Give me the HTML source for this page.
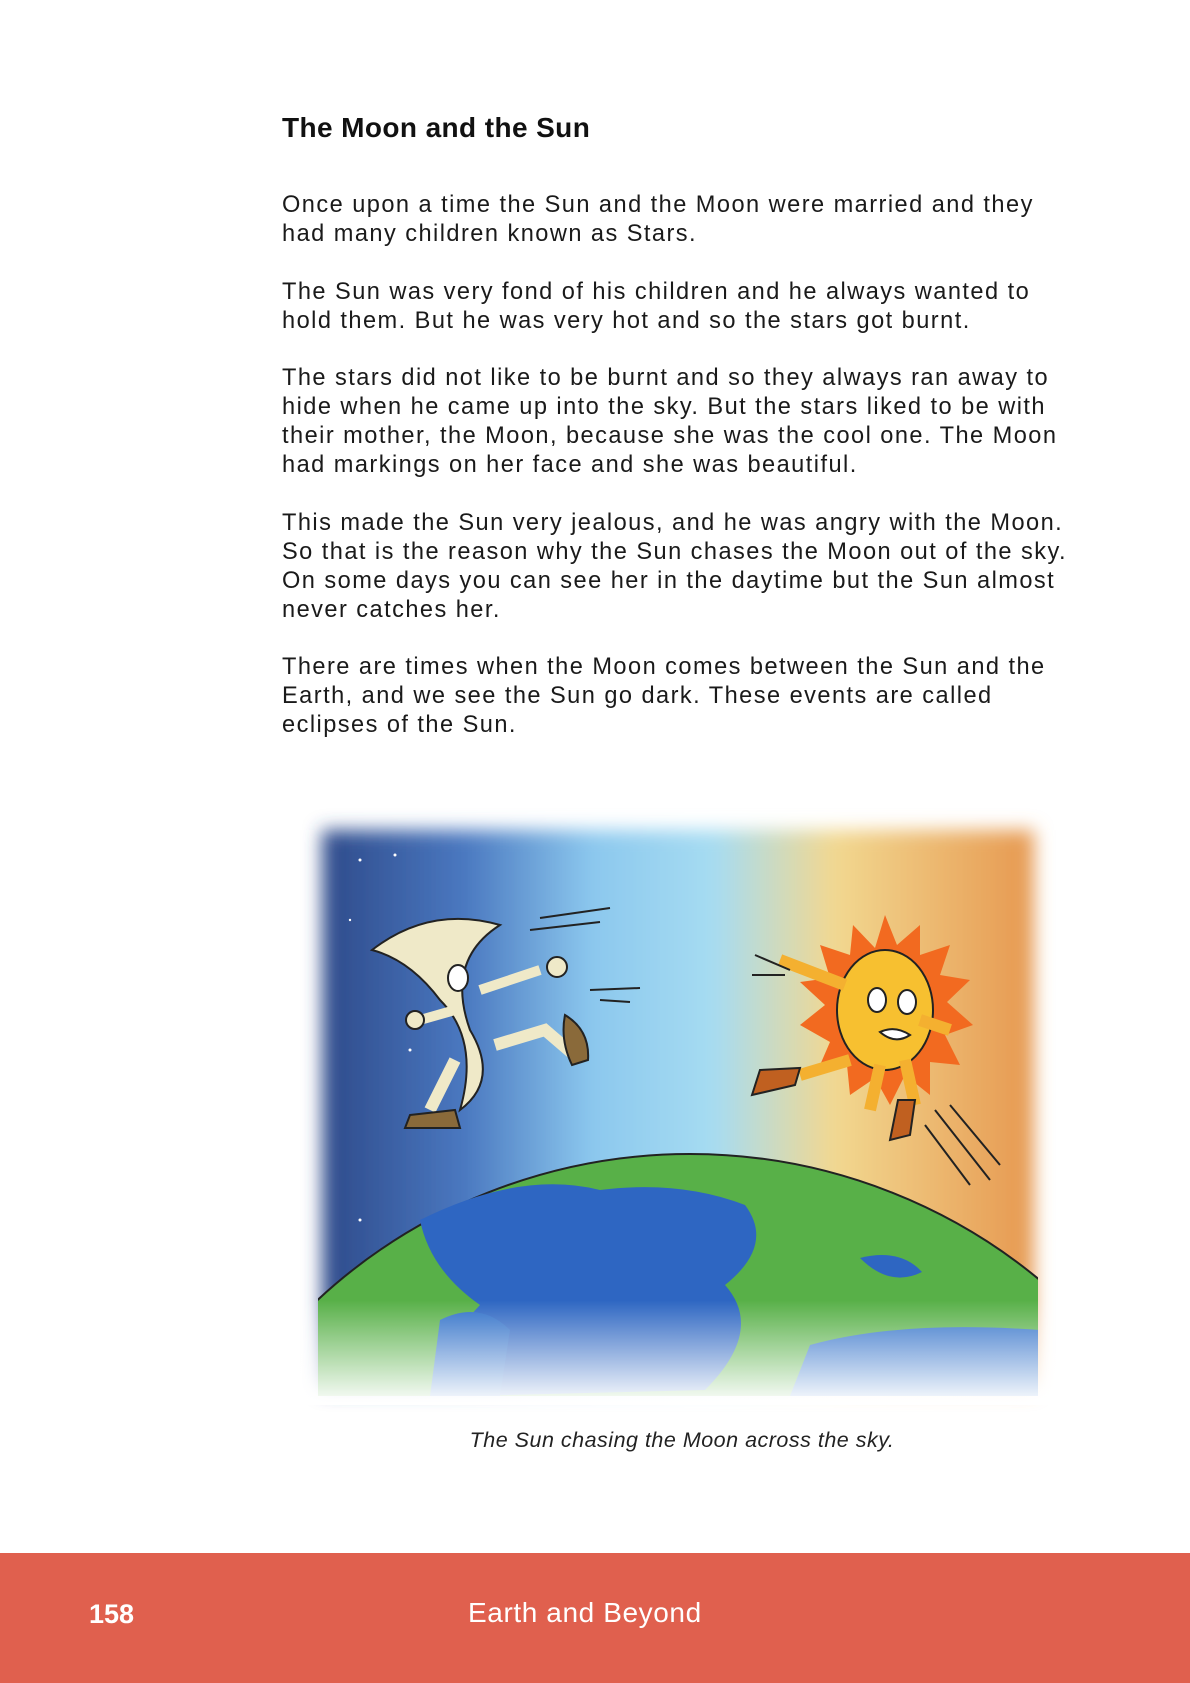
<!DOCTYPE html>
<html><head><meta charset="utf-8"><style>
html,body{margin:0;width:1190px;height:1683px;overflow:hidden}
body{background:#fff;position:relative;font-family:"Liberation Sans",sans-serif;color:#1a1a1a}
h1{position:absolute;left:282px;top:112px;margin:0;font-size:28px;font-weight:bold;letter-spacing:0.4px;color:#111}
.txt{position:absolute;left:282px;top:191px;font-size:23.6px;line-height:29px;letter-spacing:1.45px;white-space:nowrap}
.txt p{margin:0 0 28.6px 0}
.cap{position:absolute;left:182px;width:1000px;top:1428px;text-align:center;font-style:italic;font-size:21.5px;letter-spacing:0.5px;color:#222}
.foot{position:absolute;left:0;top:1553px;width:1190px;height:130px;background:#e0604e;color:#fff}
.pn{position:absolute;left:89px;top:46px;font-weight:bold;font-size:27px}
.ft{position:absolute;left:468px;top:44px;font-size:28px;letter-spacing:0.6px}
svg{position:absolute;left:0;top:0}
</style></head><body>
<h1>The Moon and the Sun</h1>
<div class="txt">
<p>Once upon a time the Sun and the Moon were married and they<br>had many children known as Stars.</p>
<p>The Sun was very fond of his children and he always wanted to<br>hold them. But he was very hot and so the stars got burnt.</p>
<p>The stars did not like to be burnt and so they always ran away to<br>hide when he came up into the sky. But the stars liked to be with<br>their mother, the Moon, because she was the cool one. The Moon<br>had markings on her face and she was beautiful.</p>
<p>This made the Sun very jealous, and he was angry with the Moon.<br>So that is the reason why the Sun chases the Moon out of the sky.<br>On some days you can see her in the daytime but the Sun almost<br>never catches her.</p>
<p>There are times when the Moon comes between the Sun and the<br>Earth, and we see the Sun go dark. These events are called<br>eclipses of the Sun.</p>
</div>
<svg width="1190" height="1420" viewBox="0 0 1190 1420">
<defs>
<linearGradient id="sky" x1="0" x2="1" y1="0" y2="0">
<stop offset="0" stop-color="#2e4a8a"/><stop offset="0.2" stop-color="#4a78c0"/><stop offset="0.38" stop-color="#8cc8ee"/><stop offset="0.55" stop-color="#a6dcf2"/><stop offset="0.72" stop-color="#f2d890"/><stop offset="1" stop-color="#e69850"/>
</linearGradient>
<linearGradient id="fade" x1="0" x2="0" y1="0" y2="1"><stop offset="0" stop-color="#fff" stop-opacity="0"/><stop offset="1" stop-color="#fff" stop-opacity="1"/></linearGradient>
<filter id="bl" x="-10%" y="-10%" width="120%" height="120%"><feGaussianBlur stdDeviation="9"/></filter>
<clipPath id="cl"><rect x="318" y="826" width="720" height="570"/></clipPath>
</defs>
<g filter="url(#bl)"><rect x="322" y="830" width="712" height="560" fill="url(#sky)"/></g>
<g clip-path="url(#cl)">
<circle cx="690" cy="1702" r="548" fill="#58b048" stroke="#222" stroke-width="2"/>
<path d="M420 1220 Q520 1170 600 1190 Q680 1180 745 1205 Q775 1245 725 1285 Q765 1330 705 1390 L470 1396 Q440 1345 480 1305 Q430 1270 420 1220Z" fill="#2e66c2"/>
<path d="M860 1258 Q900 1248 922 1272 Q890 1288 860 1258Z" fill="#2e66c2"/>
<path d="M810 1345 Q900 1320 1040 1330 L1040 1396 L790 1396Z" fill="#3070c8"/>
<path d="M440 1320 Q480 1300 510 1330 L500 1396 L430 1396Z" fill="#3070c8"/>
<circle cx="360" cy="860" r="1.5" fill="#fff"/><circle cx="395" cy="855" r="1.5" fill="#fff"/><circle cx="350" cy="920" r="1.2" fill="#fff"/><circle cx="410" cy="1050" r="1.5" fill="#fff"/><circle cx="360" cy="1220" r="1.5" fill="#fff"/>
</g>
<rect x="300" y="1300" width="760" height="105" fill="url(#fade)"/>
<!-- moon -->
<path d="M372 950 Q430 905 500 925 Q445 960 470 1030 Q500 1080 460 1110 Q480 1040 440 1000 Q410 960 372 950Z" fill="#efe9c8" stroke="#222" stroke-width="2"/>
<ellipse cx="458" cy="978" rx="10" ry="13" fill="#fff" stroke="#222" stroke-width="2"/>
<path d="M455 1060 L430 1110" stroke="#efe9c8" stroke-width="12" fill="none"/>
<path d="M410 1115 L455 1110 L460 1128 L405 1128Z" fill="#8a6a3a" stroke="#222" stroke-width="2"/>
<path d="M495 1045 L545 1030 L580 1060" stroke="#efe9c8" stroke-width="12" fill="none"/>
<path d="M565 1015 Q590 1030 588 1060 L572 1065 Q560 1040 565 1015Z" fill="#8a6a3a" stroke="#222" stroke-width="2"/>
<path d="M455 1010 L420 1020" stroke="#efe9c8" stroke-width="10"/><circle cx="415" cy="1020" r="9" fill="#efe9c8" stroke="#222" stroke-width="2"/>
<path d="M480 990 L540 970" stroke="#efe9c8" stroke-width="10"/><circle cx="557" cy="967" r="10" fill="#efe9c8" stroke="#222" stroke-width="2"/>
<path d="M540 918 L610 908 M530 930 L600 922 M590 990 L640 988 M600 1000 L630 1002" stroke="#222" stroke-width="2"/>
<!-- sun -->
<g transform="translate(885,1010)">
<polygon points="0,-95 12,-65 35,-85 35,-55 65,-65 55,-35 85,-30 62,-8 88,15 60,25 75,55 45,52 45,85 20,65 5,95 -10,68 -35,85 -38,55 -68,62 -55,32 -85,15 -60,-5 -85,-28 -55,-32 -65,-65 -35,-55 -32,-85 -10,-62" fill="#f26a20"/>
<ellipse cx="0" cy="0" rx="48" ry="60" fill="#f7c030" stroke="#222" stroke-width="2"/>
<ellipse cx="-8" cy="-10" rx="9" ry="12" fill="#fff" stroke="#222" stroke-width="2"/><ellipse cx="22" cy="-8" rx="9" ry="12" fill="#fff" stroke="#222" stroke-width="2"/>
<path d="M-5 22 Q10 15 25 25 Q10 35 -5 22Z" fill="#fff" stroke="#222" stroke-width="2"/>
</g>
<path d="M845 985 L780 960 M850 1060 L800 1075 M880 1065 L870 1110 M905 1060 L915 1105 M920 1020 L950 1030" stroke="#f4b030" stroke-width="12" fill="none"/>
<path d="M760 1070 L800 1068 L795 1085 L752 1095Z" fill="#c06020" stroke="#222" stroke-width="2"/>
<path d="M898 1100 L915 1100 L910 1135 L890 1140Z" fill="#c06020" stroke="#222" stroke-width="2"/>
<path d="M755 955 L790 970 M752 975 L785 975" stroke="#222" stroke-width="2"/>
<path d="M935 1110 L990 1180 M950 1105 L1000 1165 M925 1125 L970 1185" stroke="#222" stroke-width="2"/>
</svg>
<div class="cap">The Sun chasing the Moon across the sky.</div>
<div class="foot"><div class="pn">158</div><div class="ft">Earth and Beyond</div></div>
</body></html>
